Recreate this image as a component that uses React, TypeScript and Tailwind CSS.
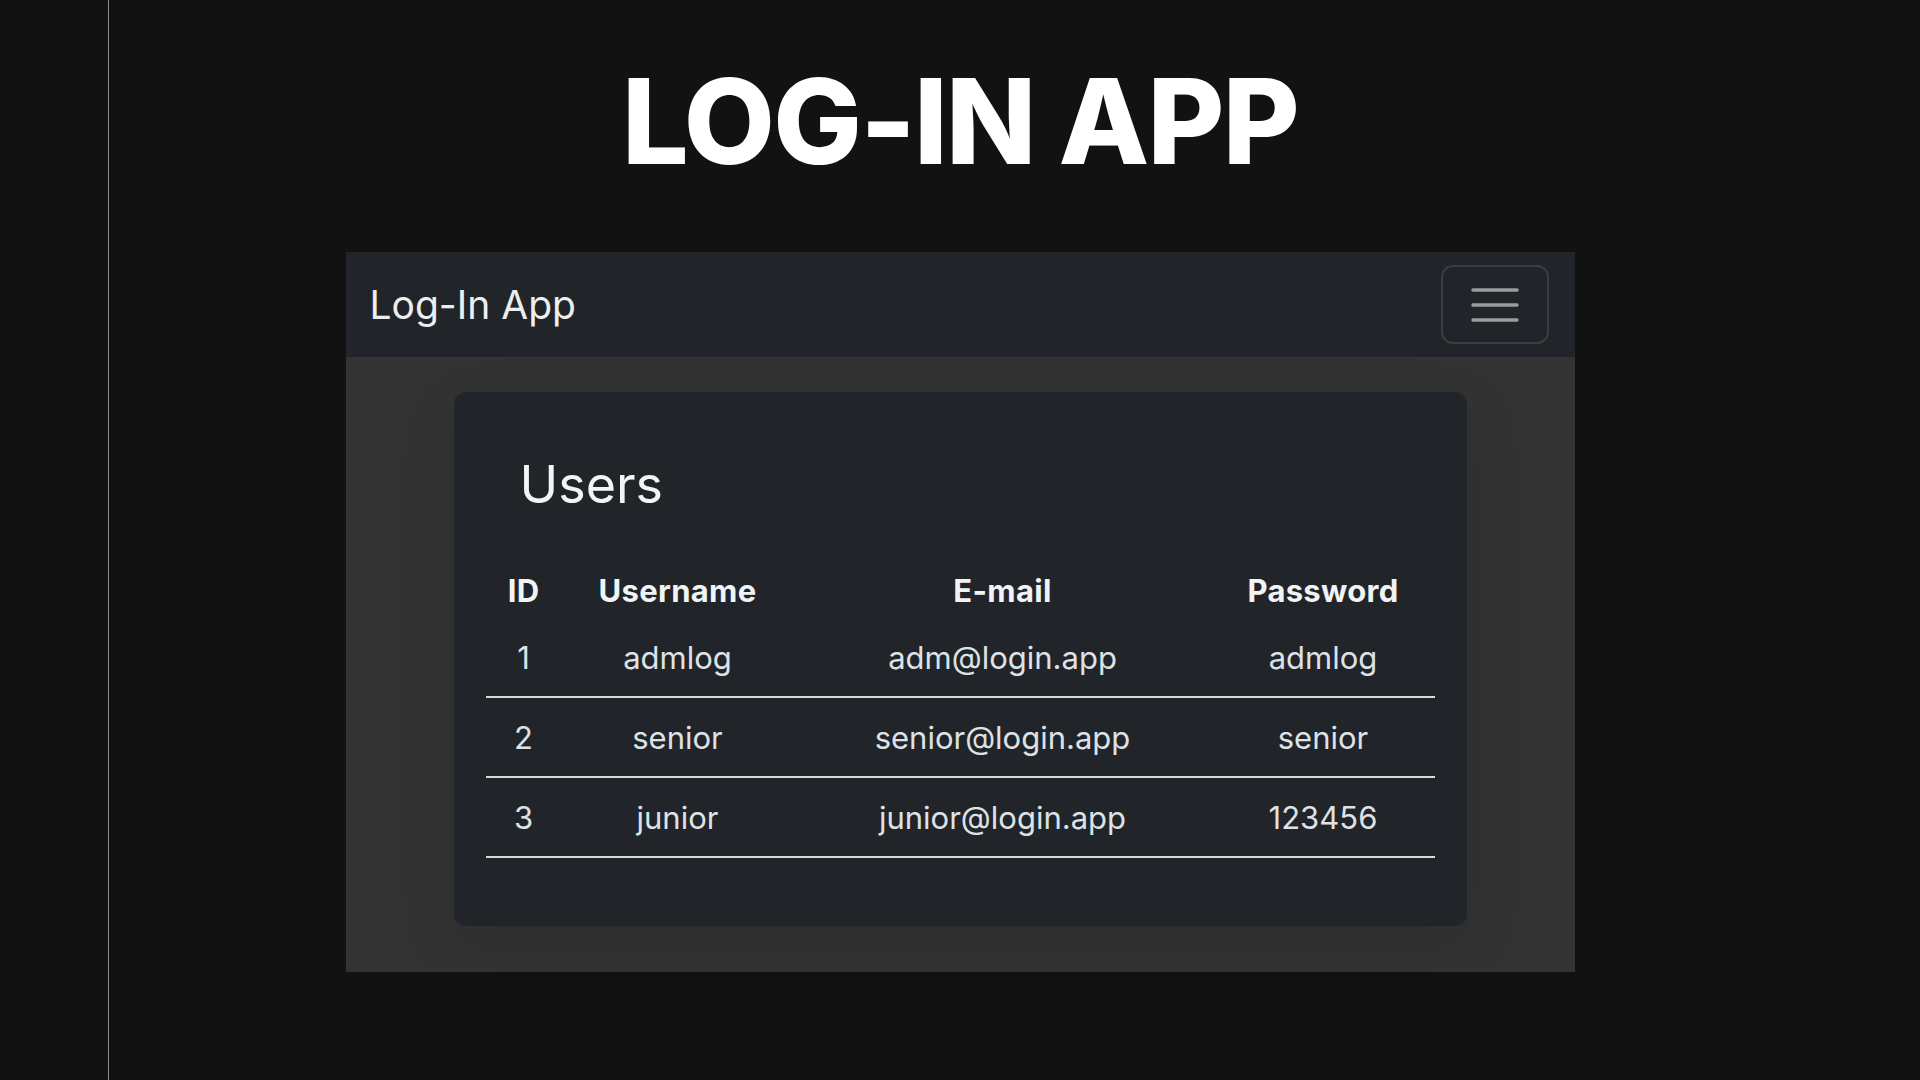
const users = [
  { id: 1, username: "admlog", email: "adm@login.app", password: "admlog" },
  { id: 2, username: "senior", email: "senior@login.app", password: "senior" },
  { id: 3, username: "junior", email: "junior@login.app", password: "123456" },
];

const cols = "grid grid-cols-[76px_232px_418px_223px]";

function MenuIcon() {
  return (
    <svg width="48" height="34" viewBox="0 0 48 34" fill="none">
      <path
        d="M2 2h44M2 17h44M2 32h44"
        stroke="#9a9b9d"
        strokeWidth="3.5"
        strokeLinecap="round"
      />
    </svg>
  );
}

function UsersCard() {
  return (
    <div className="mx-auto mt-[35px] flex h-[534px] w-[1013px] flex-col rounded-[12px] bg-[#212529] px-[32px] pt-[67px] shadow-[0_20px_60px_rgba(0,0,0,0.12)]">
      <h2 className="pl-[34px] text-[52px] leading-none font-normal text-[#f3f4f6]">
        Users
      </h2>
      <div className="mt-[51px] leading-none">
        <div className={`${cols} h-[56px] items-center text-center text-[31px] font-bold tracking-[0.01em] text-[#f1f3f5]`}>
          <div>ID</div>
          <div>Username</div>
          <div>E-mail</div>
          <div>Password</div>
        </div>
        {users.map((user) => (
          <div
            key={user.id}
            className={`${cols} h-[80px] items-center border-b-2 border-[#d6d9dc] text-center text-[31px] text-[#dee2e6]`}
          >
            <div>{user.id}</div>
            <div>{user.username}</div>
            <div>{user.email}</div>
            <div>{user.password}</div>
          </div>
        ))}
      </div>
    </div>
  );
}

export default function App() {
  return (
    <div
      className="relative flex h-[1080px] w-full flex-col items-center overflow-hidden bg-[#121212]"
      style={{ fontFamily: "Inter, 'Noto Sans', sans-serif" }}
    >
      <div className="absolute top-0 left-[108px] h-full w-px bg-[#8c8c8c]" />

      <h1 className="mt-[62px] text-[118px] leading-none font-extrabold tracking-[-0.015em] text-white">
        LOG-IN APP
      </h1>

      <div className="mt-[72px] flex h-[720px] w-[1229px] flex-col bg-[#333333]">
        <nav className="flex h-[105px] items-center justify-between bg-[#212529] pr-[26px] pl-[24px]">
          <span className="text-[39px] leading-none text-[#eceef0]">Log-In App</span>
          <button
            type="button"
            className="flex h-[79px] w-[108px] items-center justify-center rounded-[12px] border-2 border-[#3a3d41]"
          >
            <MenuIcon />
          </button>
        </nav>
        <UsersCard />
      </div>
    </div>
  );
}
